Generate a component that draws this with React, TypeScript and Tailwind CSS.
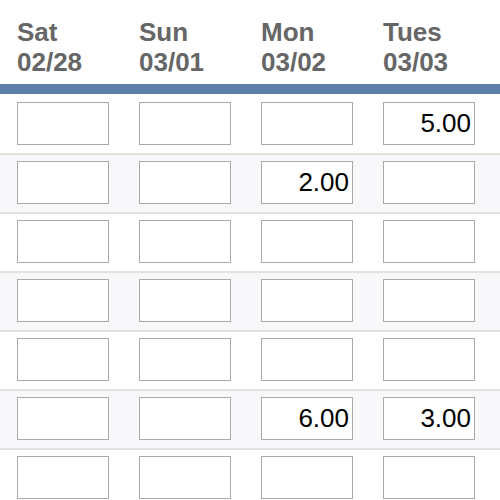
import React from "react";

const days = [
  { name: "Sat", date: "02/28" },
  { name: "Sun", date: "03/01" },
  { name: "Mon", date: "03/02" },
  { name: "Tues", date: "03/03" },
];

const rows: string[][] = [
  ["", "", "", "5.00"],
  ["", "", "2.00", ""],
  ["", "", "", ""],
  ["", "", "", ""],
  ["", "", "", ""],
  ["", "", "6.00", "3.00"],
  ["", "", "", ""],
];

export default function App() {
  return (
    <div className="w-[500px] h-[500px] overflow-hidden bg-white" style={{ fontFamily: "'Liberation Sans', Arial, sans-serif" }}>
      {/* Day headers */}
      <div className="flex gap-[30px] pl-[17px] pt-[17px] pb-[7px]">
        {days.map((d) => (
          <div key={d.name} className="w-[92px] shrink-0 text-[26px] leading-[30px] font-bold text-[#666666]">
            <div>{d.name}</div>
            <div>{d.date}</div>
          </div>
        ))}
      </div>
      <div className="h-[10px] bg-[#5d7ea9]" />

      {rows.map((row, i) => (
        <div
          key={i}
          className={`flex gap-[30px] pl-[17px] pb-[8px] border-b-2 border-[#e2e2dc] ${i === 0 ? "pt-[8px]" : "pt-[6px]"} ${i % 2 === 1 ? "bg-[#f8f8fa]" : "bg-white"}`}
        >
          {row.map((v, j) => (
            <input
              key={j}
              readOnly
              value={v}
              className="w-[92px] h-[43px] shrink-0 bg-white border border-[#a9a9a9] text-right pr-[3px] text-[26px] text-black outline-none"
              style={{ fontFamily: "'Liberation Sans', Arial, sans-serif" }}
            />
          ))}
        </div>
      ))}
    </div>
  );
}
